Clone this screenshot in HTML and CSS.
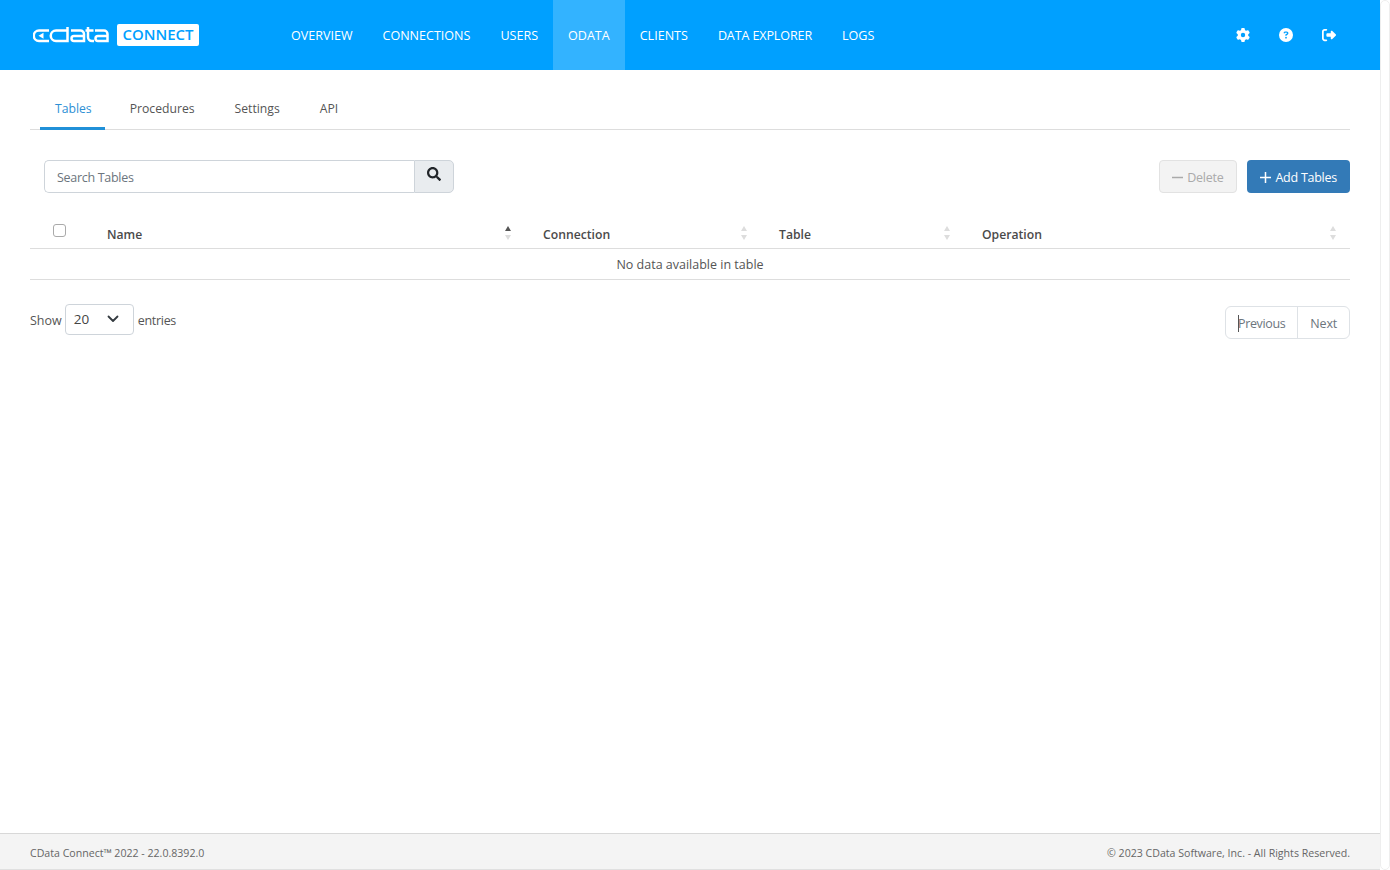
FILE: index.html
```html
<!DOCTYPE html>
<html lang="en">
<head>
<meta charset="utf-8">
<title>CData Connect - OData</title>
<link rel="stylesheet" href="styles.css">
</head>
<body>
<div class="page">
  <div class="main">
    <header class="topbar">
      <a class="brand" href="#">
        <svg class="brand-mark" viewBox="0 0 76 16" width="76" height="16" aria-label="CData">
          <g fill="none" stroke="#fff" stroke-width="2.500">
            <path d="M16 3.500H6a5.250 5.250 0 0 0 0 10.500h10"/>
            <path d="M34.500 0v14H23a5.250 5.250 0 0 1 0-10.500h11.500"/>
            <path d="M38 3.500h9.500a3.500 3.500 0 0 1 3.500 3.500v7H41a2.500 2.500 0 0 1 0-5h10"/>
            <path d="M55 0v10a4 4 0 0 0 4 4h2M52.500 3.500h8"/>
            <path d="M62 3.500h9a3.500 3.500 0 0 1 3.500 3.500v7H65a2.500 2.500 0 0 1 0-5h9.500"/>
          </g>
          <path d="M5.500 8.750l5-3v6z" fill="#fff"/>
        </svg>
        <span class="brand-badge">CONNECT</span>
      </a>
      <nav class="nav">
        <a class="nav-link" href="#">Overview</a>
        <a class="nav-link" href="#">Connections</a>
        <a class="nav-link" href="#">Users</a>
        <a class="nav-link is-active" href="#">OData</a>
        <a class="nav-link" href="#">Clients</a>
        <a class="nav-link nav-link-tight" href="#">Data Explorer</a>
        <a class="nav-link" href="#">Logs</a>
      </nav>
      <div class="tools">
        <a class="tool" href="#" aria-label="Settings"><svg viewBox="0 0 512 512" width="14" height="14"><path fill="#fff" d="M495.900 166.600c3.200 8.700 .5 18.400-6.400 24.600l-43.300 39.400c1.100 8.300 1.700 16.800 1.700 25.400s-.6 17.100-1.700 25.400l43.300 39.400c6.900 6.200 9.600 15.900 6.400 24.600c-4.400 11.900-9.700 23.300-15.800 34.300l-4.700 8.100c-6.600 11-14 21.400-22.100 31.200c-5.900 7.200-15.700 9.600-24.500 6.800l-55.700-17.700c-13.400 10.300-28.200 18.900-44 25.400l-12.500 57.100c-2 9.100-9 16.300-18.200 17.800c-13.800 2.300-28 3.500-42.500 3.500s-28.700-1.200-42.500-3.500c-9.200-1.500-16.200-8.700-18.200-17.800l-12.500-57.100c-15.800-6.500-30.600-15.100-44-25.400L83.100 425.900c-8.800 2.800-18.600 .3-24.500-6.800c-8.100-9.800-15.500-20.200-22.100-31.200l-4.700-8.100c-6.100-11-11.400-22.400-15.800-34.300c-3.200-8.700-.5-18.400 6.400-24.600l43.300-39.400C64.600 273.100 64 264.600 64 256s.6-17.100 1.700-25.400L22.400 191.200c-6.900-6.200-9.600-15.900-6.400-24.600c4.400-11.900 9.700-23.300 15.800-34.300l4.700-8.100c6.600-11 14-21.400 22.100-31.200c5.900-7.200 15.700-9.600 24.500-6.800l55.700 17.700c13.400-10.300 28.200-18.900 44-25.400l12.500-57.100c2-9.100 9-16.300 18.200-17.800C227.300 1.200 241.500 0 256 0s28.700 1.200 42.500 3.500c9.200 1.500 16.200 8.700 18.200 17.800l12.500 57.100c15.800 6.500 30.600 15.100 44 25.400l55.700-17.700c8.800-2.800 18.600-.3 24.500 6.800c8.100 9.800 15.500 20.200 22.100 31.200l4.700 8.100c6.100 11 11.400 22.400 15.800 34.300zM256 336a80 80 0 1 0 0-160 80 80 0 1 0 0 160z"/></svg></a>
        <a class="tool" href="#" aria-label="Help"><svg viewBox="0 0 512 512" width="14" height="14"><path fill="#fff" d="M256 512A256 256 0 1 0 256 0a256 256 0 1 0 0 512zM169.800 165.300c7.900-22.300 29.100-37.300 52.800-37.300h58.300c34.900 0 63.100 28.300 63.100 63.100c0 22.600-12.100 43.500-31.700 54.800L280 264.400c-.2 13-10.900 23.600-24 23.600c-13.300 0-24-10.700-24-24V250.500c0-8.600 4.600-16.500 12.100-20.800l44.300-25.400c4.700-2.700 7.600-7.700 7.600-13.100c0-8.400-6.800-15.100-15.100-15.100H222.600c-3.400 0-6.400 2.100-7.500 5.300l-.4 1.200c-4.400 12.500-18.200 19-30.600 14.600s-19-18.200-14.600-30.600l.4-1.200zM224 352a32 32 0 1 1 64 0 32 32 0 1 1 -64 0z"/></svg></a>
        <a class="tool" href="#" aria-label="Sign out"><svg viewBox="0 0 512 512" width="14" height="14"><path fill="#fff" d="M377.900 105.900L500.700 228.700c7.200 7.200 11.300 17.100 11.300 27.300s-4.100 20.100-11.300 27.300L377.900 406.100c-6.400 6.400-15 9.900-24 9.900c-18.700 0-33.900-15.200-33.900-33.900l0-62.100-128 0c-17.700 0-32-14.300-32-32l0-64c0-17.700 14.300-32 32-32l128 0 0-62.100c0-18.700 15.200-33.900 33.900-33.900c9 0 17.600 3.600 24 9.900zM160 96L96 96c-17.700 0-32 14.300-32 32l0 256c0 17.700 14.300 32 32 32l64 0c17.700 0 32 14.300 32 32s-14.300 32-32 32l-64 0c-53 0-96-43-96-96L0 128C0 75 43 32 96 32l64 0c17.700 0 32 14.300 32 32s-14.300 32-32 32z"/></svg></a>
      </div>
    </header>

    <main class="content">
      <ul class="tabs">
        <li class="tab is-active">Tables</li>
        <li class="tab">Procedures</li>
        <li class="tab">Settings</li>
        <li class="tab">API</li>
      </ul>

      <div class="toolbar">
        <div class="search">
          <span class="search-input">Search Tables</span>
          <span class="search-btn"><svg viewBox="0 0 512 512" width="14" height="14"><path fill="#212529" d="M505 442.700L405.300 343c-4.500-4.500-10.600-7-17-7H372c27.600-35.300 44-79.700 44-128C416 93.100 322.900 0 208 0S0 93.100 0 208s93.100 208 208 208c48.300 0 92.700-16.400 128-44v16.300c0 6.400 2.500 12.500 7 17l99.700 99.700c9.400 9.400 24.600 9.400 33.900 0l28.300-28.300c9.400-9.400 9.400-24.600.1-34zM208 336c-70.700 0-128-57.200-128-128 0-70.700 57.200-128 128-128 70.700 0 128 57.200 128 128 0 70.700-57.200 128-128 128z"/></svg></span>
        </div>
        <div class="actions">
          <span class="btn btn-disabled"><svg class="btn-sign" viewBox="0 0 11 11" width="11" height="11"><path d="M0 5.500h11" stroke="#aaa" stroke-width="1.500"/></svg>Delete</span>
          <span class="btn btn-primary"><svg class="btn-sign" viewBox="0 0 11 11" width="11" height="11"><path d="M0 5.500h11M5.500 0v11" stroke="#fff" stroke-width="1.500"/></svg>Add Tables</span>
        </div>
      </div>

      <table class="grid">
        <colgroup>
          <col class="col-check"><col class="col-name"><col class="col-conn"><col class="col-table"><col>
        </colgroup>
        <thead>
          <tr>
            <th class="check-cell"><span class="checkbox"></span></th>
            <th><div class="th-in"><span class="th-label">Name</span><span class="sort sort-asc"></span></div></th>
            <th><div class="th-in"><span class="th-label">Connection</span><span class="sort"></span></div></th>
            <th><div class="th-in"><span class="th-label">Table</span><span class="sort"></span></div></th>
            <th><div class="th-in th-last"><span class="th-label">Operation</span><span class="sort"></span></div></th>
          </tr>
        </thead>
        <tbody>
          <tr><td colspan="5" class="empty">No data available in table</td></tr>
        </tbody>
      </table>

      <div class="table-foot">
        <div class="length">
          <span class="length-label">Show</span>
          <span class="select">20<svg viewBox="0 0 12 8" width="12" height="8"><path d="M1.500 1.500L6 6l4.500-4.500" fill="none" stroke="#343a40" stroke-width="1.800" stroke-linecap="round" stroke-linejoin="round"/></svg></span>
          <span class="length-label length-after">entries</span>
        </div>
        <div class="pager">
          <span class="page-btn page-prev"><span class="caret"></span>Previous</span>
          <span class="page-btn page-next">Next</span>
        </div>
      </div>
    </main>

    <footer class="footer">
      <span>CData Connect™ 2022 - 22.0.8392.0</span>
      <span>© 2023 CData Software, Inc. - All Rights Reserved.</span>
    </footer>
  </div>
  <div class="scrollbar"></div>
</div>
</body>
</html>
```

FILE: styles.css
```css
* { box-sizing: border-box; }
html, body { margin: 0; height: 100%; }
body {
  font-family: "Open Sans", "Noto Sans", sans-serif;
  font-size: 12.500px;
  color: #555;
  background: #fff;
  overflow: hidden;
}
a { text-decoration: none; color: inherit; }

.page { display: flex; height: 870px; }
.main { width: 1380px; display: flex; flex-direction: column; }
.scrollbar {
  width: 10px;
  background: #fff;
  border: 1px solid #eee;
  border-radius: 5px;
}

.topbar {
  height: 70px;
  background: #00a0ff;
  display: flex;
  align-items: stretch;
  padding: 0 30px 0 33px;
  flex: none;
}
.brand { display: flex; align-items: center; gap: 8px; width: 243px; flex: none; }
.brand-mark { display: block; }
.brand-badge {
  background: #fff;
  color: #00a0ff;
  font-weight: 600;
  font-size: 15px;
  height: 22px;
  line-height: 21px;
  width: 82px;
  text-align: center;
  border-radius: 2px;
  margin-top: -1px;
}
.nav { display: flex; }
.nav-link {
  display: flex;
  align-items: center;
  padding: 0 15px;
  color: #fff;
  font-size: 12.550px;
  text-transform: uppercase;
}
.nav-link-tight { letter-spacing: -0.12px; }
.nav-link.is-active { background: #33b3ff; }
.tools { margin-left: auto; display: flex; align-items: center; }
.tool { width: 43px; display: flex; justify-content: center; }
.tool svg { display: block; }

.content { flex: 1; padding: 0 30px; }

.tabs {
  list-style: none;
  margin: 0;
  padding: 18px 0 0 10px;
  display: flex;
  gap: 10px;
  height: 60px;
  border-bottom: 1px solid #ddd;
}
.tab {
  padding: 0 15px;
  height: 42px;
  line-height: 42px;
  color: #555;
  font-size: 12.200px;
}
.tab.is-active {
  padding-right: 13px;
  color: #2d8fd5;
  border-bottom: 3px solid #2090d8;
}

.toolbar {
  display: flex;
  justify-content: space-between;
  margin-top: 30px;
  padding-left: 14px;
}
.search { display: flex; width: 410px; height: 33px; }
.search-input {
  flex: 1;
  border: 1px solid #ced4da;
  border-right: 0;
  border-radius: 5px 0 0 5px;
  padding-left: 12px;
  line-height: 33px;
  color: #6c757d;
  letter-spacing: -0.3px;
}
.search-btn {
  width: 40px;
  background: #e9ecef;
  border: 1px solid #ced4da;
  border-radius: 0 5px 5px 0;
  display: flex;
  justify-content: center;
  padding-top: 6px;
}
.search-btn svg { display: block; }
.actions { display: flex; gap: 10px; }
.btn {
  height: 33px;
  padding: 1px 12px 0;
  border-radius: 4px;
  border: 1px solid transparent;
  display: flex;
  align-items: center;
  letter-spacing: -0.25px;
}
.btn-sign { display: block; margin-right: 4px; }
.btn-disabled { background: #f3f3f3; border-color: #e2e2e2; color: #aaa; padding-right: 13px; }
.btn-primary { background: #337ab7; color: #fff; }

.grid {
  width: 100%;
  table-layout: fixed;
  border-collapse: collapse;
  margin-top: 21px;
}
.col-check { width: 62px; }
.col-name { width: 436px; }
.col-conn { width: 236px; }
.col-table { width: 203px; }
.grid th {
  height: 34px;
  padding: 0;
  border-bottom: 1px solid #ddd;
  font-weight: 600;
  font-size: 12.200px;
  text-align: left;
  color: #4a4a4a;
  vertical-align: bottom;
}
.check-cell { position: relative; }
.checkbox {
  position: absolute;
  left: 23px;
  top: 10px;
  width: 13px;
  height: 13px;
  border: 1px solid #aaa;
  border-radius: 3px;
  background: #fff;
}
.th-in {
  display: flex;
  justify-content: space-between;
  align-items: center;
  padding: 0 16px 1px 15px;
  height: 27px;
}
.th-label { padding-top: 2px; }
.th-last { padding-right: 13px; }
.sort {
  width: 7px;
  height: 14px;
  margin-top: -1px;
  position: relative;
}
.sort::before, .sort::after {
  content: "";
  position: absolute;
  left: 0;
  border-left: 3.500px solid transparent;
  border-right: 3.500px solid transparent;
}
.sort::before { top: 0; border-bottom: 5px solid #ddd; }
.sort::after { bottom: 0; border-top: 5px solid #ddd; }
.sort-asc::before { border-bottom-color: #555; }

.empty {
  height: 31px;
  text-align: center;
  border-bottom: 1px solid #ddd;
  padding: 2px 0 0;
}

.table-foot {
  display: flex;
  justify-content: space-between;
  margin-top: 24px;
}
.length { display: flex; align-items: center; height: 31px; gap: 3px; }
.length-label { padding-top: 2px; }
.length-after { letter-spacing: -0.3px; margin-left: 1px; }
.select {
  width: 69px;
  height: 31px;
  border: 1px solid #ced4da;
  border-radius: 4px;
  display: flex;
  align-items: center;
  justify-content: space-between;
  padding: 0 14px 0 8px;
  color: #444;
  font-size: 13.500px;
}
.pager { display: flex; height: 33px; margin-top: 2px; border: 1px solid #dee2e6; border-radius: 6px; }
.page-btn { padding: 0 12px; line-height: 33px; color: #6c757d; }
.page-next { letter-spacing: -0.2px; }
.page-prev { border-right: 1px solid #dee2e6; position: relative; letter-spacing: -0.35px; }
.caret {
  position: absolute;
  left: 12px;
  top: 8px;
  width: 1px;
  height: 17px;
  background: #555;
}

.footer {
  height: 37px;
  flex: none;
  background: #f4f4f4;
  border-top: 1px solid #d8d8d8;
  border-bottom: 1px solid #e0e0e0;
  display: flex;
  justify-content: space-between;
  align-items: center;
  padding: 2px 30px 0;
  font-size: 10.600px;
  color: #666;
}
```
